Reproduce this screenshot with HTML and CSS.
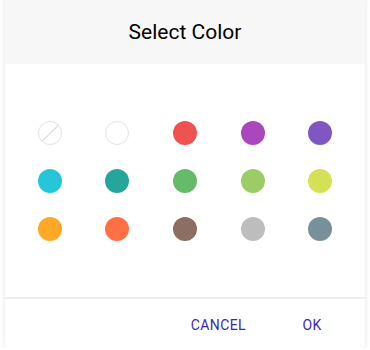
FILE: index.html
```html
<!DOCTYPE html>
<html lang="en">
<head>
  <meta charset="UTF-8">
  <title>Select Color</title>
  <link rel="stylesheet" href="styles.css">
</head>
<body>

  <!-- Farb-Dialog -->
  <div class="dialog">
    <div class="dialog-title">Select Color</div>

    <div class="swatches">
      <div class="cell"><span class="dot none"></span></div>
      <div class="cell"><span class="dot white"></span></div>
      <div class="cell"><span class="dot red"></span></div>
      <div class="cell"><span class="dot purple"></span></div>
      <div class="cell"><span class="dot deep-purple"></span></div>

      <div class="cell"><span class="dot cyan"></span></div>
      <div class="cell"><span class="dot teal"></span></div>
      <div class="cell"><span class="dot green"></span></div>
      <div class="cell"><span class="dot light-green"></span></div>
      <div class="cell"><span class="dot lime"></span></div>

      <div class="cell"><span class="dot orange"></span></div>
      <div class="cell"><span class="dot deep-orange"></span></div>
      <div class="cell"><span class="dot brown"></span></div>
      <div class="cell"><span class="dot grey"></span></div>
      <div class="cell"><span class="dot blue-grey"></span></div>
    </div>

    <div class="dialog-actions">
      <button class="btn">CANCEL</button>
      <button class="btn">OK</button>
    </div>
  </div>

</body>
</html>
```

FILE: styles.css
```css
body {
  margin: 0;
  background-color: #fff;
  font-family: Roboto, "Liberation Sans", sans-serif;
}

.dialog {
  margin: -4px 5px 0;
  height: 352px;
  background-color: #fff;
  border-radius: 4px;
  box-shadow: 0 0 5px rgba(0, 0, 0, 0.12);
  overflow: hidden;
  display: flex;
  flex-direction: column;
}

.dialog-title {
  height: 68px;
  padding-top: 4px;
  box-sizing: border-box;
  line-height: 64px;
  background-color: #f7f7f7;
  text-align: center;
  font-size: 21px;
  color: #000;
}

.swatches {
  display: grid;
  grid-template-columns: repeat(5, 1fr);
  grid-auto-rows: 48px;
  padding: 45px 11px 44px;
  border-bottom: 2px solid #eeeeee;
}

.cell {
  display: flex;
  align-items: center;
  justify-content: center;
}

.dot {
  width: 24px;
  height: 24px;
  border-radius: 50%;
  box-sizing: border-box;
}

.white {
  border: 1px solid #e2e2e2;
  background-color: #fff;
}

.none {
  border: 1px solid #e2e2e2;
  background: linear-gradient(135deg, transparent 48%, #e2e2e2 48%, #e2e2e2 53%, transparent 53%);
}

.red { background-color: #ef5350; }
.purple { background-color: #ab47bc; }
.deep-purple { background-color: #7e57c2; }
.cyan { background-color: #26c6da; }
.teal { background-color: #26a69a; }
.green { background-color: #66bb6a; }
.light-green { background-color: #9ccc65; }
.lime { background-color: #d4e157; }
.orange { background-color: #ffa726; }
.deep-orange { background-color: #ff7043; }
.brown { background-color: #8d6e63; }
.grey { background-color: #bdbdbd; }
.blue-grey { background-color: #78909c; }

.dialog-actions {
  flex: 1;
  display: flex;
  align-items: center;
  justify-content: flex-end;
  gap: 18px;
  padding: 2px 21px 0 0;
}

.btn {
  min-width: 64px;
  height: 36px;
  padding: 0 16px;
  border: none;
  background: none;
  font-family: Roboto, "Liberation Sans", sans-serif;
  font-size: 14px;
  letter-spacing: 0.4px;
  color: #3a2ab3;
}
```
